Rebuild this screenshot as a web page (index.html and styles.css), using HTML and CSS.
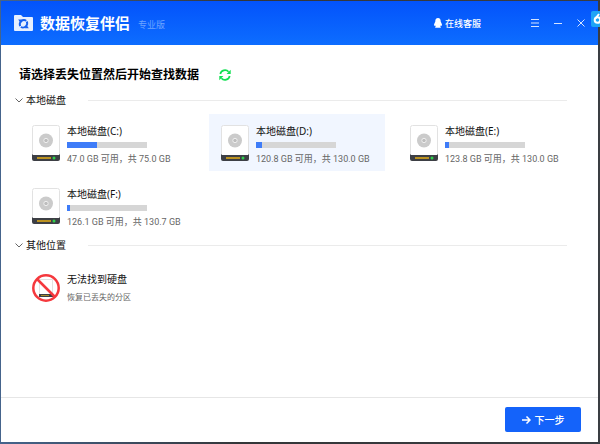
FILE: index.html
```html
<!DOCTYPE html>
<html lang="zh-CN">
<head>
<meta charset="utf-8">
<title>数据恢复伴侣</title>
<link rel="stylesheet" href="styles.css">
</head>
<body>
<svg class="defs" aria-hidden="true">
  <symbol id="disk" viewBox="0 0 28 36">
    <rect x=".5" y=".5" width="27" height="34" rx="2" fill="#fff" stroke="#e2e2e2"/>
    <path d="M0 29l1 1h26l1-1v5q0 2-2 2H2q-2 0-2-2z" fill="#3d3f45"/>
    <circle cx="14" cy="15.500" r="7" fill="#cbcbcb"/>
    <circle cx="14" cy="15.500" r="2.200" fill="#bdbdbd" stroke="#efefef"/>
    <path d="M5 33h14" stroke="#d3a21c" stroke-width="1.700"/>
    <circle cx="22" cy="33" r="1.500" fill="#2fd04c"/>
  </symbol>
</svg>
<div class="window">
  <header class="titlebar">
    <svg class="logo" viewBox="0 0 20 16" aria-hidden="true">
      <path d="M1 0h6l2 2h9q1 0 1 1v12q0 1-1 1H1q-1 0-1-1V1q0-1 1-1z" fill="#e6efff"/>
      <path d="M6.200 11.200A4.300 4.300 0 0 1 12.300 5.700M12.800 6.500A4.300 4.300 0 0 1 6.800 12" fill="none" stroke="#1560f0" stroke-width="1.900"/>
      <path d="M4.200 4.500h4.300L6.200 7.500zM14.800 13.200h-4.300l2.300-3z" fill="#1560f0"/>
    </svg>
    <h1 class="brand">数据恢复伴侣</h1>
    <span class="edition">专业版</span>
    <a class="service" href="#">
      <svg class="qq" viewBox="0 0 8 10" aria-hidden="true"><path d="M4 0c2 0 2.700 1.500 2.700 3.400L8 6.500 7.600 8l-.9-.6-.4 1 .7.800-.5.500H1.500L1 9.200l.7-.8-.4-1-.9.600L0 6.500l1.300-3.100C1.300 1.500 2 0 4 0z" fill="#fff"/></svg>
      在线客服
    </a>
    <div class="controls">
      <button class="control" aria-label="菜单"><svg viewBox="0 0 8 8"><path d="M0 .5h8M0 4h8M0 7.500h8"/></svg></button>
      <button class="control" aria-label="最小化"><svg viewBox="0 0 8 8"><path d="M0 4.500h8"/></svg></button>
      <button class="control" aria-label="关闭"><svg viewBox="0 0 8 8"><path d="M.5.500l7 7M7.500.500l-7 7"/></svg></button>
    </div>
  </header>
  <main class="content">
    <div class="prompt">
      <h2 class="question">请选择丢失位置然后开始查找数据</h2>
      <button class="refresh" aria-label="刷新">
        <svg viewBox="0 0 12 12"><path d="M1.300 5A4.800 4.800 0 0 1 9.600 2.800M10.700 7a4.800 4.800 0 0 1-8.300 2.200" fill="none" stroke="#12e052" stroke-width="1.700"/><path d="M11.700.8v4.100H7.600zM.3 11.200V7.100h4.100z" fill="#12e052"/></svg>
      </button>
    </div>
    <section class="group">
      <button class="group-title"><svg class="chevron" viewBox="0 0 8 5"><path d="M.5.500L4 4 7.500.500"/></svg><span class="group-name">本地磁盘</span><span class="rule"></span></button>
      <div class="grid">
        <button class="disk"><svg class="icon"><use href="#disk"/></svg><span class="info"><span class="name">本地磁盘(C:)</span><span class="bar"><span class="used" style="width:38%"></span></span><span class="detail">47.0 GB 可用，共 75.0 GB</span></span></button>
        <button class="disk active"><svg class="icon"><use href="#disk"/></svg><span class="info"><span class="name">本地磁盘(D:)</span><span class="bar"><span class="used" style="width:7%"></span></span><span class="detail">120.8 GB 可用，共 130.0 GB</span></span></button>
        <button class="disk"><svg class="icon"><use href="#disk"/></svg><span class="info"><span class="name">本地磁盘(E:)</span><span class="bar"><span class="used" style="width:5%"></span></span><span class="detail">123.8 GB 可用，共 130.0 GB</span></span></button>
        <button class="disk"><svg class="icon"><use href="#disk"/></svg><span class="info"><span class="name">本地磁盘(F:)</span><span class="bar"><span class="used" style="width:4%"></span></span><span class="detail">126.1 GB 可用，共 130.7 GB</span></span></button>
      </div>
    </section>
    <section class="group">
      <button class="group-title"><svg class="chevron" viewBox="0 0 8 5"><path d="M.5.500L4 4 7.500.500"/></svg><span class="group-name">其他位置</span><span class="rule"></span></button>
      <div class="grid">
        <button class="disk lost">
          <svg class="banned" viewBox="0 0 28 28">
            <path d="M7.500 5.500h13v17h-13z" fill="#fff" stroke="#e2e2e2"/>
            <path d="M7 20h14v3H7z" fill="#3d3f45"/><path d="M9 21.500h8" stroke="#a98a2c"/>
            <circle cx="14" cy="14" r="12.700" fill="none" stroke="#f5383d" stroke-width="2.500"/>
            <path d="M5 5l18 18" stroke="#f5383d" stroke-width="2.500"/>
          </svg>
          <span class="info"><span class="name">无法找到硬盘</span><span class="detail">恢复已丢失的分区</span></span>
        </button>
      </div>
    </section>
  </main>
  <footer class="footer">
    <button class="next"><svg class="arrow" viewBox="0 0 9 8"><path d="M0 4h8M4.500.500L8 4 4.500 7.500"/></svg>下一步</button>
  </footer>
</div>
<div class="dock" aria-hidden="true">
  <svg viewBox="0 0 9 16"><circle cx="6.500" cy="9" r="2.800"/><path d="M4.500 7.500L8 3"/></svg>
</div>
</body>
</html>
```
FILE: styles.css
```css
* { box-sizing: border-box; }

body {
  margin: 0;
  min-height: 100vh;
  display: flex;
  padding: 1px 2px 2px 1px;
  background: linear-gradient(to right, #45648c, #343638 40%, #3a3d42);
  font-family: "Noto Sans", "Noto Sans CJK SC", sans-serif;
  color: #111;
}

button {
  border: 0;
  padding: 0;
  background: none;
  font: inherit;
  color: inherit;
  text-align: left;
}

h1, h2 { margin: 0; }
svg { display: block; flex: none; }
.defs { position: absolute; width: 0; height: 0; }

.window {
  flex: 1;
  display: flex;
  flex-direction: column;
  background: #fff;
}

.titlebar {
  display: flex;
  align-items: center;
  height: 44px;
  padding: 0 13px;
  background: linear-gradient(#0353fb, #0d6dff);
  color: #fff;
}

.logo { width: 20px; height: 16px; }
.brand { margin-left: 6px; font-size: 15px; line-height: 20px; }
.edition { margin: 2px 0 0 8px; font-size: 9px; color: #6ea4ff; }

.service {
  display: flex;
  align-items: center;
  gap: 3px;
  margin-left: auto;
  font-size: 9px;
  font-weight: 500;
  color: #fff;
  text-decoration: none;
}

.qq { width: 8px; height: 10px; }
.controls { display: flex; gap: 15px; margin-left: 50px; }
.control svg { width: 8px; height: 8px; stroke: #d5e4ff; fill: none; }

.content { flex: 1; padding-top: 21px; }

.prompt {
  display: flex;
  align-items: center;
  gap: 20px;
  padding-left: 18px;
}

.question { font-size: 12px; line-height: 18px; color: #000; }
.refresh svg { width: 12px; height: 12px; }

.group { padding: 8px 24px 0 14px; }
.group + .group { padding-top: 3px; }

.group-title {
  display: flex;
  align-items: center;
  width: 100%;
  font-size: 10px;
  line-height: 16px;
}

.chevron { width: 8px; height: 5px; margin-right: 3px; fill: none; stroke: #666; }
.rule { flex: 1; height: 1px; margin: 0 7px 0 22px; background: #ebebeb; }

.grid {
  display: grid;
  grid-template-columns: repeat(3, 1fr);
  gap: 6px 13px;
  padding: 6px 0 0 5px;
}

.disk {
  display: flex;
  align-items: center;
  gap: 7px;
  height: 57px;
  padding-left: 12px;
}

.active { background: #f1f6ff; }
.icon { width: 28px; height: 36px; }
.banned { width: 28px; height: 28px; }

.info { display: flex; flex-direction: column; padding-top: 4px; }
.name { font-size: 10px; line-height: 14px; }
.bar { width: 80px; height: 6px; margin: 4px 0; background: #d6d6d6; }
.used { display: block; height: 100%; background: #3e7cf8; }
.detail {
  font-family: Roboto, "Noto Sans CJK SC", sans-serif;
  font-size: 9px;
  line-height: 14px;
  color: #666;
  white-space: nowrap;
}

.lost .info { gap: 5px; padding-top: 2px; }
.lost .detail { font-size: 8px; }

.footer {
  display: flex;
  justify-content: flex-end;
  padding: 9px 17px 10px;
  border-top: 1px solid #e6e6e6;
}

.next {
  display: flex;
  align-items: center;
  justify-content: center;
  gap: 4px;
  width: 76px;
  height: 25px;
  border-radius: 2px;
  background: #1463fa;
  color: #fff;
  font-size: 10px;
  font-weight: 500;
}

.arrow { width: 9px; height: 8px; fill: none; stroke: #fff; stroke-width: 1.5; }

.dock {
  position: absolute;
  top: 11px;
  right: 0;
  width: 9px;
  height: 16px;
  border-radius: 2px 0 0 2px;
  background: #1fa4f5;
}

.dock svg { width: 9px; height: 16px; fill: none; stroke: #fff; stroke-width: 2; }
```
